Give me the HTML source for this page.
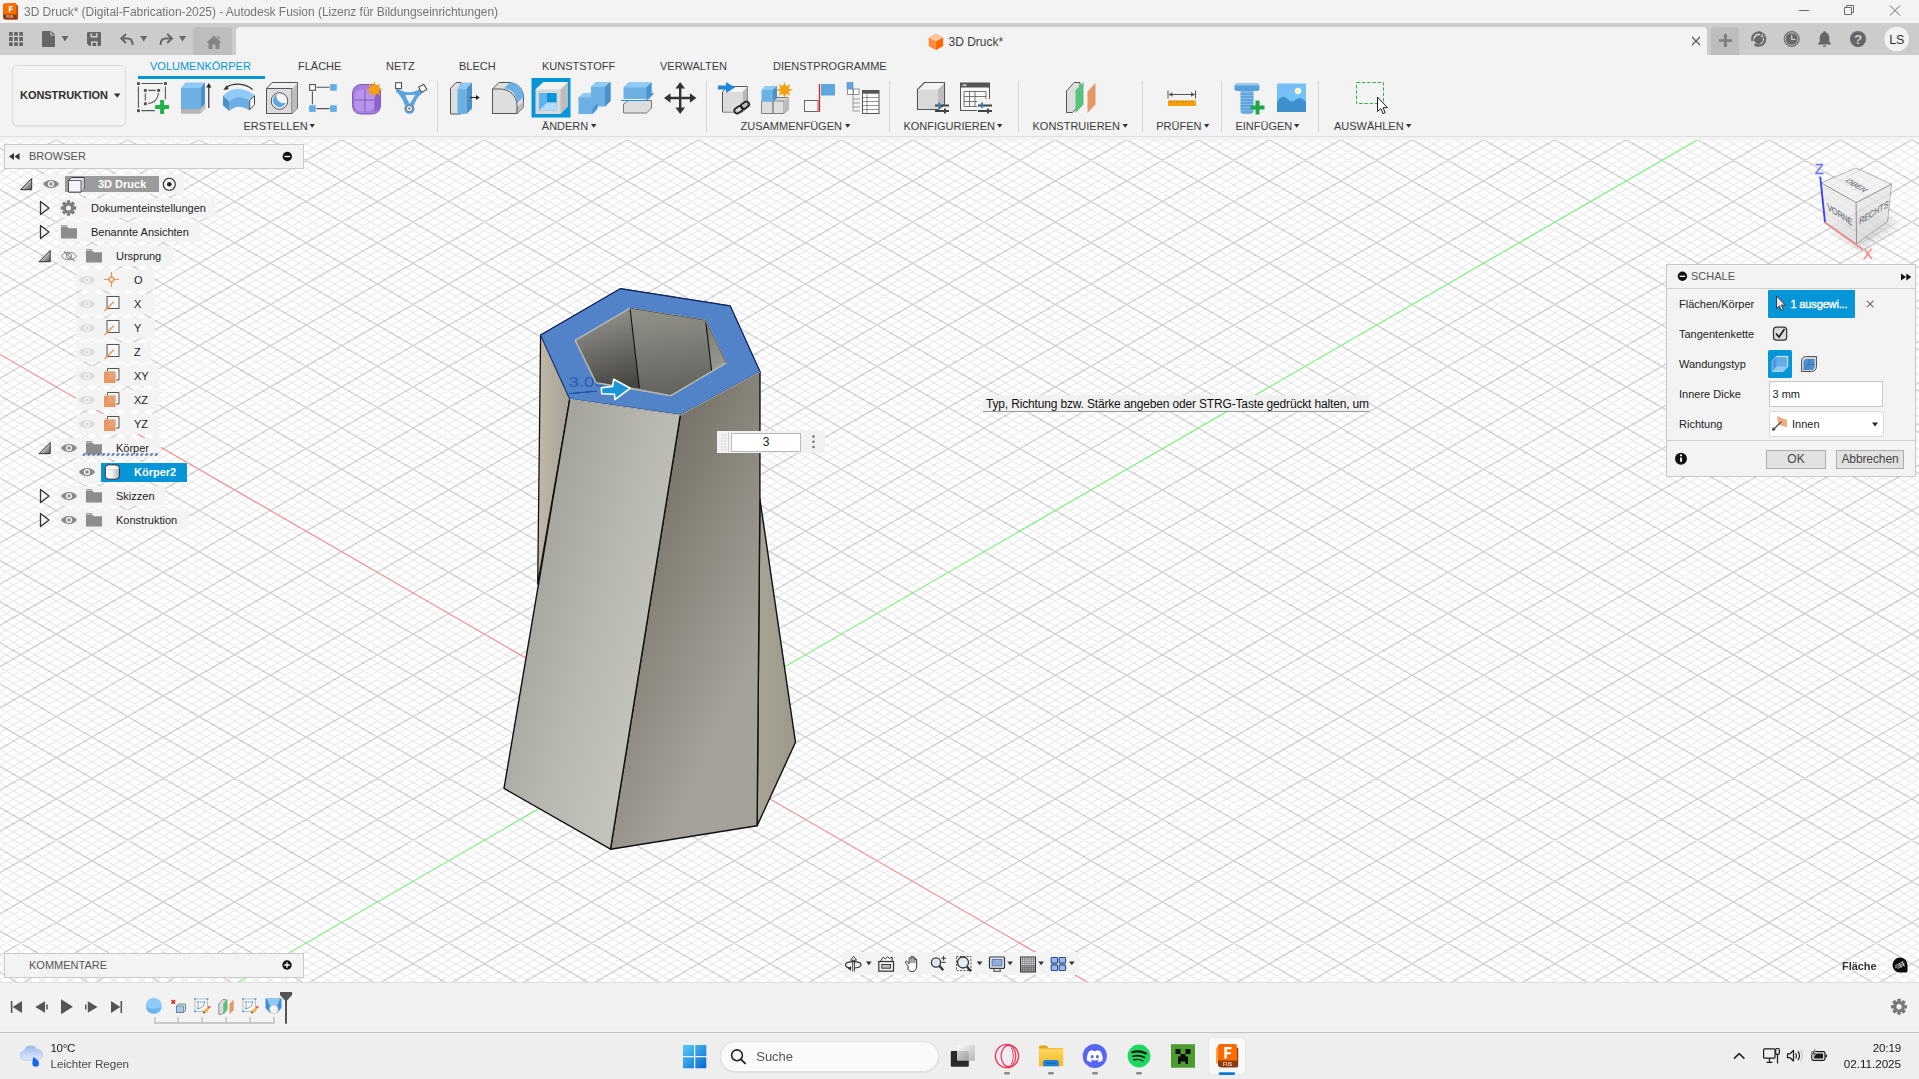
<!DOCTYPE html>
<html lang="de">
<head>
<meta charset="utf-8">
<title>3D Druck* - Autodesk Fusion</title>
<style>
*{box-sizing:border-box;margin:0;padding:0}
html,body{width:1919px;height:1079px;overflow:hidden;background:#f3f3f3}
body{font-family:"Liberation Sans",Arial,sans-serif;font-size:11px;color:#2b2b2b;position:relative}
.abs{position:absolute}
.t{position:absolute;white-space:pre;line-height:1}
svg{position:absolute;overflow:visible}
#titlebar{left:0;top:0;width:1919px;height:23px;background:#f3f3f3}
#tabbar{left:0;top:23px;width:1919px;height:32px;background:#cccccc}
#ribbon{left:0;top:55px;width:1919px;height:85px;background:#f3f3f3}
#canvas{left:0;top:140px;width:1919px;height:842px;background:#fff;overflow:hidden}
#timeline{left:0;top:982px;width:1919px;height:50px;background:#f2f2f2;border-top:1px solid #dedede;border-bottom:1px solid #f6f6f6}
#taskbar{left:0;top:1032px;width:1919px;height:47px;background:#eeeeee;border-top:1px solid #c3c3c3}
.rt{font-size:11px;color:#3c3c3c;top:61px;letter-spacing:0}
.rl{font-size:11px;color:#3c3c3c;top:121px}
.sep{position:absolute;top:81px;width:1px;height:51px;background:#d4d4d4}
.row{position:absolute;height:20px;background:rgba(243,243,243,.93)}
.bt{position:absolute;font-size:11px;color:#222;white-space:pre;line-height:1}
</style>
</head>
<body>
<!-- ===== TITLE BAR ===== -->
<div id="titlebar" class="abs">
<svg width="16" height="17" viewBox="0 0 16 17" style="left:3px;top:3px">
<path d="M1 2.2C1 1.3 1.6.8 2.4.7L11.5 0C12.4 0 13 .5 13 1.4L15 2.6V15.4C15 16.2 14.4 16.8 13.6 16.8H3C2 16.8 1.3 16.3 1.3 15.4Z" fill="#b5410e"/>
<path d="M0 2C0 1 .8.3 1.7.3H11.8C12.8.3 13.5 1 13.5 2V14H0Z" fill="#ff6b00"/>
<path d="M0 11.600H13.500V14.600C13.5 15.4 12.9 16 12 16H1.5C.7 16 0 15.4 0 14.6Z" fill="#8c3a12"/>
<path d="M5.800 2.900H9.900V4.300H7.400V5.700H9.600V7.100H7.400V9.200H5.800Z" fill="#fff"/>
<text x="6.8" y="15.2" font-size="3.4" font-weight="700" fill="#f4c9a6" text-anchor="middle" font-family="Liberation Sans,Arial,sans-serif">FUS</text>
</svg>
<div class="t" style="left:24px;top:6px;font-size:12px;color:#757575;letter-spacing:-.04px;will-change:transform">3D Druck* (Digital-Fabrication-2025) - Autodesk Fusion (Lizenz für Bildungseinrichtungen)</div>
<svg width="120" height="23" viewBox="1790 0 120 23" style="left:1790px;top:0">
<path d="M1799 10.5H1809" stroke="#6a6a6a" stroke-width="1" fill="none"/>
<path d="M1844.5 7.5h7v7h-7zM1846.5 7.5v-2h7v7h-2" stroke="#6a6a6a" stroke-width="1" fill="none" stroke-linejoin="round"/>
<path d="M1890 5.5l10 10M1900 5.5l-10 10" stroke="#6a6a6a" stroke-width="1" fill="none"/>
</svg>

</div>
<!-- ===== TAB BAR ===== -->
<div id="tabbar" class="abs">
<!-- coordinates inside tabbar: y offset 23 -->
<svg width="1919" height="32" viewBox="0 23 1919 32" style="left:0;top:0">
<!-- home tab -->
<path d="M193 55V31a4 4 0 0 1 4-4h31a4 4 0 0 1 4 4V55Z" fill="#bdbdbd"/>
<path d="M214 35.5l7.5 7.2h-2v6.3h-4v-4.500h-3v4.500h-4v-6.300h-2zM217.500 36.500h2v3l-2-2z" fill="#858585"/>
<!-- doc tab -->
<path d="M236 55V31a4 4 0 0 1 4-4H1703a4 4 0 0 1 4 4V55Z" fill="#f3f3f3"/>
<!-- plus btn -->
<path d="M1711 55V31a4 4 0 0 1 4-4h20a4 4 0 0 1 4 4V55Z" fill="#bdbdbd"/>
<path d="M1723.900 34h3.100v13h-3.100zM1719 39.200h13v2.700h-13z" fill="#808080"/>
<!-- app grid -->
<g fill="#666">
<rect x="9" y="32" width="3.8" height="3.8" rx=".5"/><rect x="14.1" y="32" width="3.8" height="3.8" rx=".5"/><rect x="19.2" y="32" width="3.8" height="3.8" rx=".5"/>
<rect x="9" y="37.1" width="3.8" height="3.8" rx=".5"/><rect x="14.1" y="37.1" width="3.8" height="3.8" rx=".5"/><rect x="19.2" y="37.1" width="3.8" height="3.8" rx=".5"/>
<rect x="9" y="42.2" width="3.8" height="3.8" rx=".5"/><rect x="14.1" y="42.2" width="3.8" height="3.8" rx=".5"/><rect x="19.2" y="42.2" width="3.8" height="3.8" rx=".5"/>
<!-- file -->
<path d="M43 31h7.5v4.5H55V46a1 1 0 0 1-1 1H43a1 1 0 0 1-1-1V32a1 1 0 0 1 1-1zM51.5 31l3.5 3.5h-3.5z"/>
<path d="M61.5 36h7l-3.5 5.4z"/>
<!-- save -->
<path d="M88 32h12a1 1 0 0 1 1 1v12a1 1 0 0 1-1 1H89.5L87 43.5V33a1 1 0 0 1 1-1zM90.500 33.300v4.200h7v-4.200h-1.600v2.700h-3.800v-2.700zM91 41.300v4.700h1.500v-3.200h3.500v3.200h1.500v-4.700z" fill-rule="evenodd"/>
<path d="M140.200 36h7l-3.500 5.400z"/>
<path d="M179 36h7l-3.500 5.400z"/>
</g>
<!-- undo / redo -->
<path d="M126 34l-4.800 4.500 4.800 4.500M121.600 38.500h6c3.300 0 5 2.300 5 6.500" stroke="#666" stroke-width="1.900" fill="none" stroke-linejoin="miter"/>
<path d="M167.200 34l4.800 4.500-4.800 4.500M171.600 38.500h-6c-3.300 0-5 2.300-5 6.500" stroke="#666" stroke-width="1.900" fill="none"/>
<!-- doc title -->
<g transform="translate(929,34.100)">
<path d="M7 0L13.900 3.700V11.900L7 15.600L0 11.900V3.700Z" fill="#ff8c3a" stroke="#e8823f" stroke-width=".5"/>
<path d="M7 0L13.900 3.700L7 7.400L0 3.700Z" fill="#ffc89f"/>
<path d="M7 7.400L13.900 3.700V11.900L7 15.600Z" fill="#ff6a00"/>
</g>
<text x="948.500" y="46" font-family="Liberation Sans,Arial,sans-serif" font-size="12" fill="#3c3c3c">3D Druck*</text>
<path d="M1692 37l8 8M1700 37l-8 8" stroke="#555" stroke-width="1.100" fill="none"/>
<!-- right icons -->
<g>
<circle cx="1758.700" cy="39" r="6.600" fill="none" stroke="#666" stroke-width="2.200" stroke-dasharray="37.500 4" transform="rotate(162 1758.700 39)"/>
<rect x="1754.600" y="36" width="7.600" height="7.600" rx="2" fill="#666" transform="rotate(45 1758.400 39.800)"/>
<path d="M1758.700 37.200l3.200-3.200M1760.900 39.300l3.200-3.200" stroke="#666" stroke-width="1.500"/>
<path d="M1761.400 34.900l1.900-1.900M1763.400 36.900l1.900-1.900" stroke="#ccc" stroke-width=".9"/>
<circle cx="1791.700" cy="39" r="7.600" fill="#666" stroke="#666" stroke-width=".8"/>
<circle cx="1791.700" cy="39" r="6.300" fill="none" stroke="#ccc" stroke-width=".9"/>
<path d="M1791.700 34.800v4.600h3.800" stroke="#ccc" stroke-width="1.300" fill="none"/>
<path d="M1824.500 31.200c-.8 0-1.300.5-1.300 1.200-2.300.7-3.500 2.700-3.500 5.300v3.800l-1.700 2.200v.8h13v-.8l-1.700-2.200v-3.800c0-2.600-1.200-4.600-3.500-5.300 0-.7-.5-1.200-1.300-1.200zM1822.800 45.600h3.400c0 .9-.8 1.500-1.700 1.500s-1.700-.6-1.700-1.500z" fill="#666"/>
<circle cx="1858" cy="39" r="8" fill="#666"/>
<text x="1858" y="43.800" font-family="Liberation Sans,Arial,sans-serif" font-size="13.500" font-weight="700" fill="#ccc" text-anchor="middle">?</text>
<circle cx="1896.700" cy="39" r="12.300" fill="#f3f3f3"/>
<text x="1896.700" y="43.600" font-family="Liberation Sans,Arial,sans-serif" font-size="12.500" fill="#333" text-anchor="middle" letter-spacing="-.3">LS</text>
</g>
</svg>

</div>
<!-- ===== RIBBON ===== -->
<div id="ribbon" class="abs">
<!-- ribbon local coords: y offset 55 -->
<div class="abs" style="left:0;top:81px;width:1919px;height:1px;background:#e0e0e0"></div>
<div class="abs" style="left:12px;top:10px;width:114px;height:61px;border:1px solid #dcdcdc;border-radius:5px;background:#f3f3f3;box-shadow:0 1px 1px rgba(0,0,0,.06)"></div>
<div class="t" style="left:20px;top:35px;font-size:11px;font-weight:700;color:#2e2e2e;letter-spacing:-.05px">KONSTRUKTION</div>
<div class="t rt" style="left:150px;top:6px;color:#0696d7;font-size:11px">VOLUMENKÖRPER</div>
<div class="abs" style="left:138px;top:20.500px;width:127px;height:3px;background:#0696d7"></div>
<div class="t rt" style="left:298px;top:6px">FLÄCHE</div>
<div class="t rt" style="left:386px;top:6px">NETZ</div>
<div class="t rt" style="left:459px;top:6px">BLECH</div>
<div class="t rt" style="left:542px;top:6px">KUNSTSTOFF</div>
<div class="t rt" style="left:660px;top:6px">VERWALTEN</div>
<div class="t rt" style="left:773px;top:6px">DIENSTPROGRAMME</div>
<div class="t rl" style="left:243.500px;top:66px">ERSTELLEN</div>
<div class="t rl" style="left:541.800px;top:66px">ÄNDERN</div>
<div class="t rl" style="left:740.500px;top:66px">ZUSAMMENFÜGEN</div>
<div class="t rl" style="left:903.400px;top:66px">KONFIGURIEREN</div>
<div class="t rl" style="left:1032.500px;top:66px">KONSTRUIEREN</div>
<div class="t rl" style="left:1156.200px;top:66px">PRÜFEN</div>
<div class="t rl" style="left:1235.400px;top:66px">EINFÜGEN</div>
<div class="t rl" style="left:1333.900px;top:66px">AUSWÄHLEN</div>
<div class="sep" style="left:437px;top:26px"></div>
<div class="sep" style="left:706px;top:26px"></div>
<div class="sep" style="left:889px;top:26px"></div>
<div class="sep" style="left:1018px;top:26px"></div>
<div class="sep" style="left:1142px;top:26px"></div>
<div class="sep" style="left:1221px;top:26px"></div>
<div class="sep" style="left:1318px;top:26px"></div>
<svg width="1919" height="85" viewBox="0 55 1919 85" style="left:0;top:0">
<g fill="#333">
<path d="M114 93.500h6.400l-3.200 4.200z"/>
<path d="M309.500 124h5.400l-2.700 3.800z"/>
<path d="M591 124h5.400l-2.700 3.800z"/>
<path d="M845 124h5.400l-2.700 3.800z"/>
<path d="M997 124h5.400l-2.700 3.800z"/>
<path d="M1122.500 124h5.400l-2.700 3.800z"/>
<path d="M1204 124h5.400l-2.700 3.800z"/>
<path d="M1294 124h5.400l-2.700 3.800z"/>
<path d="M1406 124h5.400l-2.700 3.800z"/>
</g>
<!-- ===== ERSTELLEN icons ===== -->
<!-- 1 sketch -->
<g>
<path d="M141.500 83.500H162.800M138.400 86.400V107.700M165.400 86.400V99.300M141.500 110.600H154.800" stroke="#555" stroke-width="1.100" fill="none"/>
<g fill="#555"><rect x="137" y="82.100" width="2.900" height="2.900"/><rect x="164" y="82.100" width="2.900" height="2.900"/><rect x="137" y="109.200" width="2.900" height="2.900"/></g>
<path d="M148.200 90.400H155.700M145.300 93.200V100.600" stroke="#555" stroke-width="1.100" fill="none"/>
<g fill="#555"><rect x="143.900" y="89" width="2.900" height="2.900"/><rect x="157.200" y="89" width="2.900" height="2.900"/><rect x="143.900" y="102.300" width="2.900" height="2.900"/></g>
<path d="M158.600 93c-.7 6-4.400 9.700-10.400 10.700" stroke="#555" stroke-width="1.100" fill="none"/>
<path d="M162.100 100.100v13.800M155.100 107h13.900" stroke="#22b14c" stroke-width="4" fill="none"/>
</g>
<!-- 2 extrude -->
<g>
<path d="M181 108.500h19.500l5-4.500v5l-5 4.500H181z" fill="#c4c4c4"/>
<path d="M181 108.500h19.500v5H181z" fill="#b4b4b4"/>
<path d="M181 88h19.500v21H181z" fill="#6db1e4"/>
<path d="M181 88l4.500-5.500H205L200.500 88z" fill="#8fcaf5"/>
<path d="M200.500 88l4.500-5.500v21.500l-4.500 5z" fill="#4a90c9"/>
<path d="M208.800 108v-22" stroke="#222" stroke-width="1.100"/><path d="M206.200 87.500l2.600-4.500 2.600 4.500z" fill="#222"/>
</g>
<!-- 3 revolve -->
<g>
<path d="M223 95.700C228 91 233 89.100 238.500 89.100C244 89.100 250 91.500 254.500 95.300L249.200 100.100C246 98 242.500 97 238.500 97C234.500 97.300 231.500 99 229.200 101.500Z" fill="#8fcafb"/>
<path d="M229.200 101.500C231.500 99 234.500 97.300 238.500 97C242.500 97 246 98 249.200 100.100V110.300C246 108 242.500 106.800 238.500 106.800C234.500 107.200 231.500 108.800 229.200 111Z" fill="#6aafe6"/>
<path d="M223 95.700L229.200 101.500V111L223 105.500Z" fill="#4a90cc"/>
<path d="M249.700 100.300L254.500 95.900V104.600L249.700 109.700Z" fill="#fafafa" stroke="#444" stroke-width="1"/>
<path d="M252.700 89.500C244 82.500 233 82.800 225.500 87.600" stroke="#333" stroke-width="1.100" fill="none"/><path d="M223.300 90l3.500-4.800 1.800 4z" fill="#333"/>
</g>
<!-- 4 hole -->
<g>
<path d="M266.500 88.500l5.500-6h25.500v25.500l-5.500 5.500h-25.500z" fill="#efefef" stroke="#555" stroke-width="1" stroke-linejoin="round"/>
<path d="M266.500 88.500h25.500v25h-25.500z" fill="#dcdcdc" stroke="#555" stroke-width="1"/>
<path d="M292.300 88.800l4.900-5.400v24.300l-4.900 4.900z" fill="#bdbdbd"/>
<circle cx="279.500" cy="101" r="8.300" fill="#f4f4f4" stroke="#555" stroke-width="1"/>
<path d="M273.300 98.300a6.500 6.500 0 1 0 12.400 4.500a7 7 0 0 1-9-8.500a6.500 6.500 0 0 0-3.400 4z" fill="#5ea6de"/>
</g>
<!-- 5 pattern -->
<g>
<path d="M316.500 87.300H329.500M316.500 108.600H329.500M312.400 91.500V104.500" stroke="#555" stroke-width="1.100" fill="none"/>
<rect x="309.600" y="84.500" width="5.800" height="5.800" fill="#fff" stroke="#555" stroke-width="1.100"/>
<rect x="330.100" y="84.100" width="6.700" height="6.600" fill="#62aee6"/>
<rect x="309.100" y="105.300" width="6.700" height="6.600" fill="#62aee6"/>
<rect x="330.100" y="105.300" width="6.700" height="6.600" fill="#62aee6"/>
</g>
<!-- 6 form -->
<g>
<path d="M352.500 95c0-7 3-10.500 10-10.500h9c6 0 9 3 9 9v11c0 6-3 9.500-9.500 9.500h-9c-6.500 0-9.500-3.500-9.500-9.500z" fill="#a77fe0" stroke="#7d55bd" stroke-width="1"/>
<path d="M355 96c0-4 2-6 6-6h8c4 0 5.500 2 5.500 6v9c0 4-2 6-6 6h-7.500c-4 0-6-2-6-6z" fill="#b894ec"/>
<path d="M374.500 93l6-3v18l-6 4z" fill="#8b63cb"/>
<path d="M365 90v21M355 100h19.500" stroke="#7d55bd" stroke-width=".9" fill="none"/>
<path d="M374.500 81.500l1.700 4.300 4.100-2.100-1.700 4.200 4.400 1.600-4.400 1.600 1.700 4.200-4.100-2.100-1.700 4.300-1.700-4.300-4.100 2.100 1.700-4.200-4.400-1.600 4.400-1.600-1.700-4.200 4.100 2.100z" fill="#f5a10e"/>
</g>
<!-- 7 fork -->
<g>
<path d="M397.500 88.200C401.500 91.200 405.500 92.300 410.300 92.300C414.500 92 417.500 90.600 420 88.500L423.800 91.800C419 95.500 416 99 414.300 105H404.500C403.200 99.500 400.500 95.500 395.500 91Z" fill="#5ba3de"/>
<path d="M405.200 95.300L415.200 94.800L409.700 104.300Z" fill="#f3f3f3"/>
<rect x="395.600" y="82.700" width="5.900" height="5.900" fill="#fff" stroke="#555" stroke-width="1.100"/>
<path d="M418.600 87.200L423.700 84.200L426.800 89.400L421.700 92.500Z" fill="#fff" stroke="#555" stroke-width="1.100"/>
<circle cx="409.400" cy="108.600" r="5.200" fill="#5ba3de"/><circle cx="409.400" cy="108.600" r="3.200" fill="#f1f1f1" stroke="#666" stroke-width=".9"/><path d="M407.900 108.600h3M409.400 107.100v3" stroke="#666" stroke-width=".7"/>
</g>
<!-- ===== ÄNDERN icons ===== -->
<!-- press pull -->
<g>
<path d="M450.500 88.500l5.500-6h5v31.500h-10.500z" fill="#dedede" stroke="#555" stroke-width="1" stroke-linejoin="round"/>
<path d="M457.500 88.500h9v25.500h-9z" fill="#6db1e4"/>
<path d="M457.500 88.500l5-6h9.500l-5.500 6z" fill="#8fcaf5"/>
<path d="M466.500 88.500l5.500-6v26l-5.500 5.500z" fill="#4a90c9"/>
<path d="M470 97.500h7" stroke="#222" stroke-width="1.100"/><path d="M476 95l3.800 2.500-3.800 2.500z" fill="#222"/>
</g>
<!-- fillet -->
<g>
<path d="M492.500 113.500v-24.500l6.500-6.500h9c9 0 15.500 6 15.500 15v10l-6.500 6z" fill="#dedede" stroke="#555" stroke-width="1" stroke-linejoin="round"/>
<path d="M517 107.500l6.500-6v6l-6.500 6z" fill="#bcbcbc"/>
<path d="M492.500 89h7c10 0 17.500 6.500 17.500 16.500v8h-24.500z" fill="#dedede" stroke="#555" stroke-width="1"/>
<path d="M504 88.500l6-6c8 .5 13.500 6 13.500 14.500l-6.500 6c0-8-4.500-14-13-14.500z" fill="#6db1e4"/>
</g>
<!-- shell selected -->
<g>
<rect x="531.500" y="78" width="39" height="39.500" fill="#0696d7"/>
<path d="M535.500 89.500l8-7.500h24.500v24l-7.500 8h-25z" fill="#d9d9d9"/>
<path d="M535.500 89.500l8-7.500h24.500l-7.500 7.500z" fill="#f2f2f2"/>
<path d="M560.500 89.500l7.500-7.500v24l-7.500 8z" fill="#bdbdbd"/>
<rect x="539" y="93" width="17.500" height="17.500" fill="#5fb2ec"/>
<path d="M547 93h9.500v9.500h-9.500z" fill="#0696d7"/>
<path d="M539 110.500l8-8h9.500v8z" fill="#b3dcfa"/>
</g>
<!-- combine -->
<g>
<path d="M578.500 97.500l5-4.500h7.500v-6l5-5h14.500v19l-5.500 5.500h-7.500v2l-5 5.500h-14z" fill="#6db1e4"/>
<path d="M590.500 87l5.500-5h14.500l-5.500 5zM578.500 97.500l5-4.500h7.500v4.500z" fill="#8fcaf5"/>
<path d="M605 87l5.500-5v19l-5.500 5.500zM592.500 108.500l5-5v5l-5 5.500z" fill="#4a90c9"/>
</g>
<!-- split -->
<g>
<path d="M623.500 104l5-3.500h23v7.500l-5 5h-23z" fill="#dedede" stroke="#777" stroke-width="1" stroke-linejoin="round"/>
<path d="M623.500 87.500l5-5h23v12l-5 4.500h-23z" fill="#6db1e4"/>
<path d="M623.500 87.500l5-5h23l-5 5z" fill="#8fcaf5"/>
<path d="M646.500 87.500l5-5v12l-5 4.500z" fill="#4a90c9"/>
<path d="M621 100.500h25.500l7-7.500" stroke="#2e8ad6" stroke-width="1.200" fill="none"/>
</g>
<!-- move -->
<g fill="#333">
<path d="M679 86h2.400v24h-2.400zM668 96.800h24v2.400h-24z"/>
<path d="M680.200 82l4.800 6.500h-9.600zM680.200 114l4.800-6.500h-9.600zM664 98l6.500-4.800v9.600zM696.400 98l-6.500-4.800v9.600z"/>
</g>
<!-- ===== ZUSAMMENFÜGEN ===== -->
<!-- new component -->
<g>
<path d="M722.500 92l5-5.500h20v20.500l-5 5h-20z" fill="#f6f6f6" stroke="#555" stroke-width="1" stroke-linejoin="round"/>
<path d="M742.500 92l5-5.500v20.500l-5 5z" fill="#b8b8b8"/>
<path d="M723 92h19.500v19.500h-19.500z" fill="#dcdcdc"/>
<path d="M718 85.500h8v-3.500l9 5.500-9 5.500v-3.500h-8z" fill="#1e88e0"/>
<g fill="none" stroke="#222" stroke-width="1.700"><rect x="734" y="107" width="9" height="5.500" rx="2.750" transform="rotate(-35 738.500 109.750)"/><rect x="740.500" y="102.500" width="9" height="5.500" rx="2.750" transform="rotate(-35 745 105.250)"/></g>
</g>
<!-- new body cubes -->
<g>
<path d="M761.500 101l4-3.500h22.500v12l-4 4h-22.500z" fill="#d6d6d6" stroke="#777" stroke-width="1" stroke-linejoin="round"/>
<path d="M761.500 101h11.500v12.500h-11.500zM773 101h11v12.500h-11z" fill="#dedede" stroke="#777" stroke-width=".8"/>
<path d="M784 101l4-3.500v12l-4 4z" fill="#bdbdbd"/>
<path d="M761.500 90l4-4h11.500v12l-4 3.500h-11.500z" fill="#6db1e4"/>
<path d="M761.500 90l4-4h11.500l-4 4z" fill="#8fcaf5"/><path d="M773 90l4-4v12l-4 3.500z" fill="#4a90c9"/>
<path d="M784.500 82l1.700 4.300 4.100-2.100-1.700 4.200 4.400 1.600-4.400 1.600 1.700 4.200-4.100-2.100-1.700 4.300-1.700-4.300-4.100 2.100 1.700-4.200-4.400-1.600 4.400-1.600-1.700-4.200 4.100 2.100z" fill="#f5a10e"/>
</g>
<!-- joint -->
<g>
<rect x="804.500" y="100.500" width="13.500" height="11" fill="#f6f6f6" stroke="#666" stroke-width="1"/>
<path d="M819.500 84v28" stroke="#d22" stroke-width="1.300"/>
<rect x="821" y="84" width="14" height="11.500" fill="#5ea6de"/>
</g>
<!-- table / joint origin -->
<g>
<rect x="847" y="82.500" width="6" height="6" fill="#5ea6de" stroke="#4a90c9" stroke-width=".6"/>
<rect x="847.500" y="89" width="5.500" height="5.500" fill="#fff" stroke="#777" stroke-width=".8"/><rect x="853.500" y="89" width="5.500" height="5.500" fill="#fff" stroke="#777" stroke-width=".8"/>
<path d="M853 95v16M853 99h7M853 103h7M853 107h7M853 111h7" stroke="#999" stroke-width="1" fill="none"/>
<rect x="862.500" y="90.500" width="16.500" height="23" fill="#fff" stroke="#555" stroke-width="1"/>
<rect x="862.500" y="90.500" width="16.500" height="3.200" fill="#555"/>
<path d="M862.500 97.500h16.500M862.500 101.500h16.500M862.500 105.500h16.500M862.500 109.500h16.500M867 93.500v20" stroke="#777" stroke-width=".8" fill="none"/>
</g>
<!-- ===== KONFIGURIEREN ===== -->
<g>
<path d="M917.500 89.500l7-7h20v21.500l-6 5.500h-21z" fill="#f4f4f4" stroke="#555" stroke-width="1.100" stroke-linejoin="round"/>
<path d="M918 89.500h20v19.500h-20z" fill="#d9d9d9"/>
<path d="M938 89.500l6-6v19.500l-6 6z" fill="#bdbdbd"/>
<path d="M935 105.500h14M935 111h14" stroke="#444" stroke-width="1.800"/><path d="M939 102.500v5.500" stroke="#1e88e0" stroke-width="2"/><path d="M945 108.500v5" stroke="#444" stroke-width="2"/>
</g>
<g>
<rect x="960.500" y="83" width="29" height="27.500" fill="#f8f8f8" stroke="#555" stroke-width="1"/>
<rect x="960.500" y="83" width="29" height="4.500" fill="#555"/><rect x="962.500" y="84.500" width="4" height="1.300" fill="#eee"/>
<path d="M964 91.500h22v15h-22zM964 96.500h22M964 101.500h22M969.500 91.500v15M975 91.500v15" stroke="#666" stroke-width=".9" fill="none"/>
<rect x="977" y="99" width="16" height="15" fill="#f3f3f3"/>
<path d="M978 105.500h14M978 111h14" stroke="#444" stroke-width="1.800"/><path d="M982 102.500v5.500" stroke="#1e88e0" stroke-width="2"/><path d="M988 108.500v5" stroke="#444" stroke-width="2"/>
</g>
<!-- ===== KONSTRUIEREN ===== -->
<g>
<path d="M1066.500 91l7.500-8.500h6v22l-7.500 8h-6z" fill="#dedede" stroke="#555" stroke-width="1" stroke-linejoin="round"/>
<path d="M1075.500 90.500l8-8.500v22.500l-8 8.500z" fill="#56c27a"/>
<path d="M1087.500 91.500l8-8.500v21.500l-8 8.500z" fill="#e59864"/>
</g>
<!-- ===== PRÜFEN ===== -->
<g>
<path d="M1168 90.500v8M1195.500 90.500v8M1169 94.500h26" stroke="#555" stroke-width="1" fill="none"/>
<path d="M1168.500 94.500l4-2.200v4.400zM1195 94.500l-4-2.200v4.400z" fill="#555"/>
<rect x="1168" y="100.500" width="28" height="5.500" fill="#f5a10e"/>
<path d="M1171 100.500v2.500M1174 100.500v2M1177 100.500v2.500M1180 100.500v2M1183 100.500v2.500M1186 100.500v2M1189 100.500v2.500M1192 100.500v2" stroke="#a86a00" stroke-width=".8"/>
</g>
<!-- ===== EINFÜGEN ===== -->
<g>
<path d="M1236 83.500h22l1.500 2v4l-1.500 1.500h-22l-1.500-1.500v-4z" fill="#5a9fd6"/>
<path d="M1236 83.500h22l1.500 2h-25z" fill="#8fcaf5"/>
<path d="M1240.500 91h13v21l-2 2h-9l-2-2z" fill="#7db9ea"/>
<path d="M1240.500 94h13M1240.500 97h13M1240.500 100h13M1240.500 103h13M1240.500 106h13M1240.500 109h13M1241 112h12" stroke="#4a90c9" stroke-width="1"/>
<path d="M1257.500 100.500v14M1250.500 107.500h14" stroke="#22a548" stroke-width="4" fill="none"/>
</g>
<g>
<rect x="1277" y="83.500" width="29" height="28.500" fill="#74c0f7"/>
<path d="M1277 102c4-6 7-7 11-2.500c2 2 4 3 7 1c3-3 6-4 11 1.500v10h-29z" fill="#3d8fce"/>
<circle cx="1298" cy="91" r="3.200" fill="#fff6c2"/>
</g>
<!-- ===== AUSWÄHLEN ===== -->
<g>
<rect x="1356.500" y="82.500" width="27" height="21" fill="none" stroke="#2bb24c" stroke-width="1" stroke-dasharray="3.500 1.800"/>
<path d="M1377.500 97v14.500l3.300-3 2.200 5.200 2.200-1-2.200-5h4.500z" fill="#fff" stroke="#222" stroke-width="1" stroke-linejoin="round"/>
</g>

</svg>

</div>
<!-- ===== CANVAS ===== -->
<div id="canvas" class="abs">
<svg width="1919" height="842" viewBox="0 140 1919 842" style="left:0;top:0">
<path d="M0 980.6L1919 2088.6M0 964.1L1919 2072.1M0 955.9L1919 2063.8M0 947.7L1919 2055.6M0 939.4L1919 2047.4M0 922.9L1919 2030.9M0 914.7L1919 2022.6M0 906.5L1919 2014.4M0 898.2L1919 2006.2M0 881.7L1919 1989.7M0 873.5L1919 1981.4M0 865.3L1919 1973.2M0 857.0L1919 1965.0M0 840.5L1919 1948.5M0 832.3L1919 1940.2M0 824.1L1919 1932.0M0 815.8L1919 1923.8M0 799.3L1919 1907.3M0 791.1L1919 1899.0M0 782.9L1919 1890.8M0 774.6L1919 1882.6M0 758.1L1919 1866.1M0 749.9L1919 1857.8M0 741.7L1919 1849.6M0 733.4L1919 1841.4M0 716.9L1919 1824.9M0 708.7L1919 1816.6M0 700.5L1919 1808.4M0 692.2L1919 1800.2M0 675.7L1919 1783.7M0 667.5L1919 1775.4M0 659.3L1919 1767.2M0 651.0L1919 1759.0M0 634.5L1919 1742.5M0 626.3L1919 1734.2M0 618.1L1919 1726.0M0 609.8L1919 1717.8M0 593.3L1919 1701.3M0 585.1L1919 1693.0M0 576.9L1919 1684.8M0 568.6L1919 1676.6M0 552.1L1919 1660.1M0 543.9L1919 1651.8M0 535.7L1919 1643.6M0 527.4L1919 1635.4M0 510.9L1919 1618.9M0 502.7L1919 1610.6M0 494.5L1919 1602.4M0 486.2L1919 1594.2M0 469.7L1919 1577.7M0 461.5L1919 1569.4M0 453.3L1919 1561.2M0 445.0L1919 1553.0M0 428.5L1919 1536.5M0 420.3L1919 1528.2M0 412.1L1919 1520.0M0 403.8L1919 1511.8M0 387.3L1919 1495.3M0 379.1L1919 1487.0M0 370.9L1919 1478.8M0 362.6L1919 1470.6M0 346.1L1919 1454.1M0 337.9L1919 1445.8M0 329.7L1919 1437.6M0 321.4L1919 1429.4M0 304.9L1919 1412.9M0 296.7L1919 1404.6M0 288.5L1919 1396.4M0 280.2L1919 1388.2M0 263.7L1919 1371.7M0 255.5L1919 1363.4M0 247.3L1919 1355.2M0 239.0L1919 1347.0M0 222.5L1919 1330.5M0 214.3L1919 1322.2M0 206.1L1919 1314.0M0 197.8L1919 1305.8M0 181.3L1919 1289.3M0 173.1L1919 1281.0M0 164.9L1919 1272.8M0 156.6L1919 1264.6M0 140.1L1919 1248.1M0 131.9L1919 1239.8M0 123.7L1919 1231.6M0 115.4L1919 1223.4M0 98.9L1919 1206.9M0 90.7L1919 1198.6M0 82.5L1919 1190.4M0 74.2L1919 1182.2M0 57.7L1919 1165.7M0 49.5L1919 1157.4M0 41.3L1919 1149.2M0 33.0L1919 1141.0M0 16.5L1919 1124.5M0 8.3L1919 1116.2M0 0.1L1919 1108.0M0 -8.2L1919 1099.8M0 -24.7L1919 1083.3M0 -32.9L1919 1075.0M0 -41.1L1919 1066.8M0 -49.4L1919 1058.6M0 -65.9L1919 1042.1M0 -74.1L1919 1033.8M0 -82.3L1919 1025.6M0 -90.6L1919 1017.4M0 -107.1L1919 1000.9M0 -115.3L1919 992.6M0 -123.5L1919 984.4M0 -131.8L1919 976.2M0 -148.3L1919 959.7M0 -156.5L1919 951.4M0 -164.7L1919 943.2M0 -173.0L1919 935.0M0 -189.5L1919 918.5M0 -197.7L1919 910.2M0 -205.9L1919 902.0M0 -214.2L1919 893.8M0 -230.7L1919 877.3M0 -238.9L1919 869.0M0 -247.1L1919 860.8M0 -255.4L1919 852.6M0 -271.9L1919 836.1M0 -280.1L1919 827.8M0 -288.3L1919 819.6M0 -296.6L1919 811.4M0 -313.1L1919 794.9M0 -321.3L1919 786.6M0 -329.5L1919 778.4M0 -337.8L1919 770.2M0 -354.3L1919 753.7M0 -362.5L1919 745.4M0 -370.7L1919 737.2M0 -379.0L1919 729.0M0 -395.5L1919 712.5M0 -403.7L1919 704.2M0 -411.9L1919 696.0M0 -420.2L1919 687.8M0 -436.7L1919 671.3M0 -444.9L1919 663.0M0 -453.1L1919 654.8M0 -461.4L1919 646.6M0 -477.9L1919 630.1M0 -486.1L1919 621.8M0 -494.3L1919 613.6M0 -502.6L1919 605.4M0 -519.1L1919 588.9M0 -527.3L1919 580.6M0 -535.5L1919 572.4M0 -543.8L1919 564.2M0 -560.3L1919 547.7M0 -568.5L1919 539.4M0 -576.7L1919 531.2M0 -585.0L1919 523.0M0 -601.5L1919 506.5M0 -609.7L1919 498.2M0 -617.9L1919 490.0M0 -626.2L1919 481.8M0 -642.7L1919 465.3M0 -650.9L1919 457.0M0 -659.1L1919 448.8M0 -667.4L1919 440.6M0 -683.9L1919 424.1M0 -692.1L1919 415.8M0 -700.3L1919 407.6M0 -708.6L1919 399.4M0 -725.1L1919 382.9M0 -733.3L1919 374.6M0 -741.5L1919 366.4M0 -749.8L1919 358.2M0 -766.3L1919 341.7M0 -774.5L1919 333.4M0 -782.7L1919 325.2M0 -791.0L1919 317.0M0 -807.5L1919 300.5M0 -815.7L1919 292.2M0 -823.9L1919 284.0M0 -832.2L1919 275.8M0 -848.7L1919 259.3M0 -856.9L1919 251.0M0 -865.1L1919 242.8M0 -873.4L1919 234.6M0 -889.9L1919 218.1M0 -898.1L1919 209.8M0 -906.3L1919 201.6M0 -914.6L1919 193.4M0 -931.1L1919 176.9M0 -939.3L1919 168.6M0 -947.5L1919 160.4M0 -955.8L1919 152.2M0 139.3L1919 -968.7M0 147.5L1919 -960.4M0 155.7L1919 -952.2M0 164.0L1919 -944.0M0 180.5L1919 -927.5M0 188.7L1919 -919.2M0 196.9L1919 -911.0M0 205.2L1919 -902.8M0 221.7L1919 -886.3M0 229.9L1919 -878.0M0 238.1L1919 -869.8M0 246.4L1919 -861.6M0 262.9L1919 -845.1M0 271.1L1919 -836.8M0 279.3L1919 -828.6M0 287.6L1919 -820.4M0 304.1L1919 -803.9M0 312.3L1919 -795.6M0 320.5L1919 -787.4M0 328.8L1919 -779.2M0 345.3L1919 -762.7M0 353.5L1919 -754.4M0 361.7L1919 -746.2M0 370.0L1919 -738.0M0 386.5L1919 -721.5M0 394.7L1919 -713.2M0 402.9L1919 -705.0M0 411.2L1919 -696.8M0 427.7L1919 -680.3M0 435.9L1919 -672.0M0 444.1L1919 -663.8M0 452.4L1919 -655.6M0 468.9L1919 -639.1M0 477.1L1919 -630.8M0 485.3L1919 -622.6M0 493.6L1919 -614.4M0 510.1L1919 -597.9M0 518.3L1919 -589.6M0 526.5L1919 -581.4M0 534.8L1919 -573.2M0 551.3L1919 -556.7M0 559.5L1919 -548.4M0 567.7L1919 -540.2M0 576.0L1919 -532.0M0 592.5L1919 -515.5M0 600.7L1919 -507.2M0 608.9L1919 -499.0M0 617.2L1919 -490.8M0 633.7L1919 -474.3M0 641.9L1919 -466.0M0 650.1L1919 -457.8M0 658.4L1919 -449.6M0 674.9L1919 -433.1M0 683.1L1919 -424.8M0 691.3L1919 -416.6M0 699.6L1919 -408.4M0 716.1L1919 -391.9M0 724.3L1919 -383.6M0 732.5L1919 -375.4M0 740.8L1919 -367.2M0 757.3L1919 -350.7M0 765.5L1919 -342.4M0 773.7L1919 -334.2M0 782.0L1919 -326.0M0 798.5L1919 -309.5M0 806.7L1919 -301.2M0 814.9L1919 -293.0M0 823.2L1919 -284.8M0 839.7L1919 -268.3M0 847.9L1919 -260.0M0 856.1L1919 -251.8M0 864.4L1919 -243.6M0 880.9L1919 -227.1M0 889.1L1919 -218.8M0 897.3L1919 -210.6M0 905.6L1919 -202.4M0 922.1L1919 -185.9M0 930.3L1919 -177.6M0 938.5L1919 -169.4M0 946.8L1919 -161.2M0 963.3L1919 -144.7M0 971.5L1919 -136.4M0 979.7L1919 -128.2M0 988.0L1919 -120.0M0 1004.5L1919 -103.5M0 1012.7L1919 -95.2M0 1020.9L1919 -87.0M0 1029.2L1919 -78.8M0 1045.7L1919 -62.3M0 1053.9L1919 -54.0M0 1062.1L1919 -45.8M0 1070.4L1919 -37.6M0 1086.9L1919 -21.1M0 1095.1L1919 -12.8M0 1103.3L1919 -4.6M0 1111.6L1919 3.6M0 1128.1L1919 20.1M0 1136.3L1919 28.4M0 1144.5L1919 36.6M0 1152.8L1919 44.8M0 1169.3L1919 61.3M0 1177.5L1919 69.6M0 1185.7L1919 77.8M0 1194.0L1919 86.0M0 1210.5L1919 102.5M0 1218.7L1919 110.8M0 1226.9L1919 119.0M0 1235.2L1919 127.2M0 1251.7L1919 143.7M0 1259.9L1919 152.0M0 1268.1L1919 160.2M0 1276.4L1919 168.4M0 1292.9L1919 184.9M0 1301.1L1919 193.2M0 1309.3L1919 201.4M0 1317.6L1919 209.6M0 1334.1L1919 226.1M0 1342.3L1919 234.4M0 1350.5L1919 242.6M0 1358.8L1919 250.8M0 1375.3L1919 267.3M0 1383.5L1919 275.6M0 1391.7L1919 283.8M0 1400.0L1919 292.0M0 1416.5L1919 308.5M0 1424.7L1919 316.8M0 1432.9L1919 325.0M0 1441.2L1919 333.2M0 1457.7L1919 349.7M0 1465.9L1919 358.0M0 1474.1L1919 366.2M0 1482.4L1919 374.4M0 1498.9L1919 390.9M0 1507.1L1919 399.2M0 1515.3L1919 407.4M0 1523.6L1919 415.6M0 1540.1L1919 432.1M0 1548.3L1919 440.4M0 1556.5L1919 448.6M0 1564.8L1919 456.8M0 1581.3L1919 473.3M0 1589.5L1919 481.6M0 1597.7L1919 489.8M0 1606.0L1919 498.0M0 1622.5L1919 514.5M0 1630.7L1919 522.8M0 1638.9L1919 531.0M0 1647.2L1919 539.2M0 1663.7L1919 555.7M0 1671.9L1919 564.0M0 1680.1L1919 572.2M0 1688.4L1919 580.4M0 1704.9L1919 596.9M0 1713.1L1919 605.2M0 1721.3L1919 613.4M0 1729.6L1919 621.6M0 1746.1L1919 638.1M0 1754.3L1919 646.4M0 1762.5L1919 654.6M0 1770.8L1919 662.8M0 1787.3L1919 679.3M0 1795.5L1919 687.6M0 1803.7L1919 695.8M0 1812.0L1919 704.0M0 1828.5L1919 720.5M0 1836.7L1919 728.8M0 1844.9L1919 737.0M0 1853.2L1919 745.2M0 1869.7L1919 761.7M0 1877.9L1919 770.0M0 1886.1L1919 778.2M0 1894.4L1919 786.4M0 1910.9L1919 802.9M0 1919.1L1919 811.2M0 1927.3L1919 819.4M0 1935.6L1919 827.6M0 1952.1L1919 844.1M0 1960.3L1919 852.4M0 1968.5L1919 860.6M0 1976.8L1919 868.8M0 1993.3L1919 885.3M0 2001.5L1919 893.6M0 2009.7L1919 901.8M0 2018.0L1919 910.0M0 2034.5L1919 926.5M0 2042.7L1919 934.8M0 2050.9L1919 943.0M0 2059.2L1919 951.2M0 2075.7L1919 967.7M0 2083.9L1919 976.0" stroke="#000" stroke-opacity=".088" stroke-width="1.15" fill="none"/>
<path d="M0 972.4L1919 2080.3M0 931.2L1919 2039.1M0 890.0L1919 1997.9M0 848.8L1919 1956.7M0 807.6L1919 1915.5M0 766.4L1919 1874.3M0 725.2L1919 1833.1M0 684.0L1919 1791.9M0 642.8L1919 1750.7M0 601.6L1919 1709.5M0 560.4L1919 1668.3M0 519.2L1919 1627.1M0 478.0L1919 1585.9M0 436.8L1919 1544.7M0 395.6L1919 1503.5M0 313.2L1919 1421.1M0 272.0L1919 1379.9M0 230.8L1919 1338.7M0 189.6L1919 1297.5M0 148.4L1919 1256.3M0 107.2L1919 1215.1M0 66.0L1919 1173.9M0 24.8L1919 1132.7M0 -16.4L1919 1091.5M0 -57.6L1919 1050.3M0 -98.8L1919 1009.1M0 -140.0L1919 967.9M0 -181.2L1919 926.7M0 -222.4L1919 885.5M0 -263.6L1919 844.3M0 -304.8L1919 803.1M0 -346.0L1919 761.9M0 -387.2L1919 720.7M0 -428.4L1919 679.5M0 -469.6L1919 638.3M0 -510.8L1919 597.1M0 -552.0L1919 555.9M0 -593.2L1919 514.7M0 -634.4L1919 473.5M0 -675.6L1919 432.3M0 -716.8L1919 391.1M0 -758.0L1919 349.9M0 -799.2L1919 308.7M0 -840.4L1919 267.5M0 -881.6L1919 226.3M0 -922.8L1919 185.1M0 -964.0L1919 143.9M0 172.2L1919 -935.7M0 213.4L1919 -894.5M0 254.6L1919 -853.3M0 295.8L1919 -812.1M0 337.0L1919 -770.9M0 378.2L1919 -729.7M0 419.4L1919 -688.5M0 460.6L1919 -647.3M0 501.8L1919 -606.1M0 543.0L1919 -564.9M0 584.2L1919 -523.7M0 625.4L1919 -482.5M0 666.6L1919 -441.3M0 707.8L1919 -400.1M0 749.0L1919 -358.9M0 790.2L1919 -317.7M0 831.4L1919 -276.5M0 872.6L1919 -235.3M0 913.8L1919 -194.1M0 955.0L1919 -152.9M0 996.2L1919 -111.7M0 1037.4L1919 -70.5M0 1078.6L1919 -29.3M0 1161.0L1919 53.1M0 1202.2L1919 94.3M0 1243.4L1919 135.5M0 1284.6L1919 176.7M0 1325.8L1919 217.9M0 1367.0L1919 259.1M0 1408.2L1919 300.3M0 1449.4L1919 341.5M0 1490.6L1919 382.7M0 1531.8L1919 423.9M0 1573.0L1919 465.1M0 1614.2L1919 506.3M0 1655.4L1919 547.5M0 1696.6L1919 588.7M0 1737.8L1919 629.9M0 1779.0L1919 671.1M0 1820.2L1919 712.3M0 1861.4L1919 753.5M0 1902.6L1919 794.7M0 1943.8L1919 835.9M0 1985.0L1919 877.1M0 2026.2L1919 918.3M0 2067.4L1919 959.5" stroke="#000" stroke-opacity=".175" stroke-width="1.35" fill="none"/>
<path d="M0 354.4L1919 1462.3" stroke="#f58c8c" stroke-width="1.2" fill="none"/>
<path d="M0 1119.8L1919 11.9" stroke="#7cf07c" stroke-width="1.2" fill="none"/>

<defs>
<linearGradient id="gL" gradientUnits="userSpaceOnUse" x1="520" y1="600" x2="660" y2="640"><stop offset="0" stop-color="#a5a59d"/><stop offset=".55" stop-color="#b8b8b0"/><stop offset="1" stop-color="#c3c3bb"/></linearGradient>
<linearGradient id="gM" gradientUnits="userSpaceOnUse" x1="600" y1="400" x2="827" y2="506"><stop offset="0" stop-color="#625e53"/><stop offset=".5" stop-color="#848075"/><stop offset="1" stop-color="#a5a29b"/></linearGradient>
<linearGradient id="gS" gradientUnits="userSpaceOnUse" x1="538" y1="0" x2="565" y2="0"><stop offset="0" stop-color="#c2b9a8"/><stop offset="1" stop-color="#a9a599"/></linearGradient>
<linearGradient id="gR" gradientUnits="userSpaceOnUse" x1="757" y1="0" x2="795" y2="0"><stop offset="0" stop-color="#a9a595"/><stop offset="1" stop-color="#9b978b"/></linearGradient>
<linearGradient id="gI1" gradientUnits="userSpaceOnUse" x1="600" y1="320" x2="620" y2="390"><stop offset="0" stop-color="#8c8a83"/><stop offset="1" stop-color="#454340"/></linearGradient>
<linearGradient id="gI2" gradientUnits="userSpaceOnUse" x1="670" y1="312" x2="680" y2="395"><stop offset="0" stop-color="#8f8f88"/><stop offset="1" stop-color="#62625d"/></linearGradient>
<linearGradient id="gI3" gradientUnits="userSpaceOnUse" x1="706" y1="330" x2="724" y2="365"><stop offset="0" stop-color="#7d7d77"/><stop offset="1" stop-color="#9a9a93"/></linearGradient>
</defs>
<g stroke-linejoin="round">
<!-- left sliver -->
<path d="M540.6 334.9L569.8 398.9L537.7 584Z" fill="url(#gS)" stroke="#111" stroke-width="1.3"/>
<!-- right sliver -->
<path d="M759.9 499L795.5 742.3L757.1 825.7Z" fill="url(#gR)" stroke="#111" stroke-width="1.4"/>
<!-- middle face -->
<path d="M680.4 414.6L760 371.6L759.9 499L757.1 825.7L610.5 849.2Z" fill="url(#gM)" stroke="#111" stroke-width="1.4"/>
<!-- left main face -->
<path d="M569.8 398.9L680.4 414.6L610.5 849.2L504 788.4Z" fill="url(#gL)" stroke="#111" stroke-width="1.4"/>
<!-- top ring (selected, blue) -->
<path d="M620.5 288.6L730.3 305.9L760 371.6L680.4 414.6L569.8 398.9L540.6 334.9Z" fill="#5283c9" stroke="#1d3f86" stroke-width="1"/>
<path d="M540.6 334.9L620.5 288.6L730.3 305.9L760 371.6" fill="none" stroke="#14265c" stroke-width="1.1"/>
<!-- light inner rim on ring outer edges -->
<path d="M569.8 398.9L680.4 414.6L760 371.6" fill="none" stroke="#b9b9b2" stroke-width="1" transform="translate(0,.4)"/>
<!-- dimension 3.00 -->
<text transform="translate(568.4,386.9) scale(1.3,1)" font-family="Liberation Sans, Arial, sans-serif" font-size="14.300" fill="#2a5cae">3.00</text>
<path d="M568.7 393.6L596.6 391.2" stroke="#1f4f9e" stroke-width="1" fill="none"/>
<path d="M573 393.2l6-1.6 0.3 2.2z M592 391.6l-6-0.6 0.3 2.2z" fill="#1f4f9e"/>
<!-- cavity -->
<path d="M630 308.3L705.6 320.4L726.1 363L670.9 395.6L596.1 382.7L575.3 340.4Z" fill="#77776f" stroke="#b5b5ad" stroke-width="1.2"/>
<path d="M630 308.3L639.4 388.2L596.1 382.7L575.3 340.4Z" fill="url(#gI1)"/>
<path d="M630 308.3L705.6 320.4L711.6 370.8L670.9 395.6L639.4 388.2Z" fill="url(#gI2)"/>
<path d="M705.6 320.4L726.1 363L711.6 370.8Z" fill="url(#gI3)"/>
<path d="M630 308.3L639.4 388.2M705.6 320.4L711.6 370.8" stroke="#111" stroke-width="1.1" fill="none"/>
<path d="M630 308.3L705.6 320.4L726.1 363L670.9 395.6L596.1 382.7L575.3 340.4Z" fill="none" stroke="#b8b8b0" stroke-width="1.3"/>
<path d="M630 308.3L705.6 320.4L726.1 363" fill="none" stroke="#3a3a38" stroke-width=".8"/>
</g>
<!-- blue manip arrow -->
<path d="M601.3 387.7L612.6 386.4L613.7 379.2L630.3 388.2L614.9 399.6L614.5 394.2L601.7 393.8Z" fill="#1b97d8" stroke="#fff" stroke-width="1.6" stroke-linejoin="round"/>

</svg>
<div class="abs" style="left:0;top:-140px;width:1919px;height:1079px">
<!-- ===== BROWSER ===== -->
<div class="abs" style="left:4px;top:144px;width:300px;height:25px;background:#f3f3f3;border:1px solid #cacaca"></div>
<div class="t" style="left:29px;top:151px;font-size:11px;color:#555">BROWSER</div>
<div class="row" style="left:40px;top:174px;width:144px"></div>
<div class="row" style="left:58px;top:198px;width:157px"></div>
<div class="row" style="left:58px;top:222px;width:142px"></div>
<div class="row" style="left:58px;top:246px;width:115px"></div>
<div class="row" style="left:76px;top:270px;width:79px"></div>
<div class="row" style="left:76px;top:294px;width:79px"></div>
<div class="row" style="left:76px;top:318px;width:79px"></div>
<div class="row" style="left:76px;top:342px;width:75px"></div>
<div class="row" style="left:76px;top:366px;width:83px"></div>
<div class="row" style="left:76px;top:390px;width:83px"></div>
<div class="row" style="left:76px;top:414px;width:83px"></div>
<div class="row" style="left:58px;top:438px;width:103px"></div>
<div class="row" style="left:76px;top:462px;width:111px"></div>
<div class="row" style="left:58px;top:486px;width:107px"></div>
<div class="row" style="left:58px;top:510px;width:131px"></div>
<div class="abs" style="left:65px;top:176px;width:94px;height:16px;background:#9b9b9b"></div>
<div class="abs" style="left:101px;top:462.500px;width:86px;height:19px;background:#0696d7"></div>
<div class="bt" style="left:98px;top:179px;font-weight:700;color:#fff">3D Druck</div>
<div class="bt" style="left:91px;top:203px">Dokumenteinstellungen</div>
<div class="bt" style="left:91px;top:227px">Benannte Ansichten</div>
<div class="bt" style="left:116px;top:251px">Ursprung</div>
<div class="bt" style="left:134px;top:275px">O</div>
<div class="bt" style="left:134px;top:299px">X</div>
<div class="bt" style="left:134px;top:323px">Y</div>
<div class="bt" style="left:134px;top:347px">Z</div>
<div class="bt" style="left:134px;top:371px">XY</div>
<div class="bt" style="left:134px;top:395px">XZ</div>
<div class="bt" style="left:134px;top:419px">YZ</div>
<div class="bt" style="left:116px;top:443px">Körper</div>
<div class="bt" style="left:134px;top:467px;font-weight:700;color:#fff">Körper2</div>
<div class="bt" style="left:116px;top:491px">Skizzen</div>
<div class="bt" style="left:116px;top:515px">Konstruktion</div>
<svg width="320" height="400" viewBox="0 140 320 400" style="left:0;top:140px">
<defs>
<linearGradient id="tri" x1="0" y1="0" x2="1" y2="1"><stop offset=".4" stop-color="#d8d8d8"/><stop offset="1" stop-color="#555"/></linearGradient>
<g id="eye"><path d="M-8 0C-5-5.500 5-5.500 8 0C5 5.500-5 5.500-8 0Z"/><circle r="3.100" fill="#f3f3f3"/><circle r="1.700"/></g>
<g id="fold"><path d="M0 1.500h6.300l1.200 1.700H16v10.300H0z"/><path d="M0 .2h6v.8H0z"/></g>
<g id="texp"><path d="M11.200 0V11.200H0Z" fill="url(#tri)" stroke="#333" stroke-width="1" stroke-linejoin="round"/></g>
<g id="tcol"><path d="M0 0L8.500 6.500L0 13Z" fill="#f6f6f6" stroke="#333" stroke-width="1.300" stroke-linejoin="round"/></g>
<g id="axi"><rect x="2.500" y=".5" width="12" height="12" fill="#f8f8f8" stroke="#555" stroke-width="1"/><path d="M0 15L9.500 5.500" stroke="#e8945a" stroke-width="1.400"/></g>
<g id="pla"><path d="M3.500 3.500V.5h11.500v11.500h-3" fill="none" stroke="#555" stroke-width="1"/><rect x="0" y="3.500" width="11.500" height="11.500" fill="#e8975e"/><rect x="4" y="3.700" width="7.300" height="7.300" fill="#e0a680" opacity=".75"/></g>
</defs>
<!-- header icons -->
<path d="M14 153l-5 3.500 5 3.500zM19.500 153l-5 3.500 5 3.500z" fill="#333"/>
<circle cx="287.300" cy="156.500" r="4.700" fill="#111"/><path d="M284.500 156.500h5.600" stroke="#fff" stroke-width="1.300"/>
<!-- row 1 -->
<use href="#texp" x="20.500" y="178.500"/>
<use href="#eye" x="51" y="184" fill="#8a8a8a"/>
<path d="M68.500 180.500l3-3h12.500v11.500l-3 3h-12.500z" fill="#e6e9ee" stroke="#333" stroke-width="1" stroke-linejoin="round"/><path d="M81 180.500l3-3v11.500l-3 3z" fill="#c4c8cf"/><path d="M68.500 180.500h12.500v11.500h-12.500z" fill="#f2f4f7" stroke="#333" stroke-width=".7"/>
<circle cx="169.300" cy="184.300" r="6" fill="#f6f6f6" stroke="#222" stroke-width="1.100"/><circle cx="169.300" cy="184.300" r="2.300" fill="#222"/>
<!-- row 2 -->
<use href="#tcol" x="40.500" y="201.500"/>
<g transform="translate(68.500,208)" fill="#7e7e7e"><circle r="5.600"/><g id="teeth"><rect x="-1.700" y="-7.700" width="3.400" height="15.400" rx=".6"/><rect x="-1.700" y="-7.700" width="3.400" height="15.400" rx=".6" transform="rotate(45)"/><rect x="-1.700" y="-7.700" width="3.400" height="15.400" rx=".6" transform="rotate(90)"/><rect x="-1.700" y="-7.700" width="3.400" height="15.400" rx=".6" transform="rotate(135)"/></g><circle r="2.500" fill="#f3f3f3"/></g>
<!-- row 3 -->
<use href="#tcol" x="40.500" y="225.500"/>
<use href="#fold" x="61" y="225" fill="#8c8c8c"/>
<!-- row 4 Ursprung -->
<use href="#texp" x="39" y="250.500"/>
<g transform="translate(69,256)" fill="none" stroke="#8a8a8a" stroke-width="1"><path d="M-7.500 0C-5-5 5-5 7.500 0C5 5-5 5-7.500 0Z"/><circle r="2.600"/><path d="M-5 -4.500L5.500 5" stroke-width="1.100"/></g>
<use href="#fold" x="86" y="249" fill="#8c8c8c"/>
<!-- origin children -->
<use href="#eye" x="87" y="280" fill="#dcdcdc"/><use href="#eye" x="87" y="304" fill="#dcdcdc"/><use href="#eye" x="87" y="328" fill="#dcdcdc"/><use href="#eye" x="87" y="352" fill="#dcdcdc"/><use href="#eye" x="87" y="376" fill="#dcdcdc"/><use href="#eye" x="87" y="400" fill="#dcdcdc"/><use href="#eye" x="87" y="424" fill="#dcdcdc"/>
<g transform="translate(111.500,279.500)"><path d="M0-7.500V7.500M-7.500 0H7.500" stroke="#e8945a" stroke-width="1.100"/><path d="M0-4.300L4.300 0L0 4.300L-4.300 0Z" fill="#e8945a"/><rect x="-1.400" y="-1.400" width="2.800" height="2.800" fill="#fff"/></g>
<use href="#axi" x="104.500" y="296"/><use href="#axi" x="104.500" y="320"/><use href="#axi" x="104.500" y="344"/>
<use href="#pla" x="104" y="368"/><use href="#pla" x="104" y="392"/><use href="#pla" x="104" y="416"/>
<!-- Körper -->
<use href="#texp" x="39" y="442.500"/>
<use href="#eye" x="69" y="448" fill="#8a8a8a"/>
<use href="#fold" x="86" y="441" fill="#8c8c8c"/>
<path d="M83 454.500H159" stroke="#5f79ad" stroke-width="2.400" stroke-dasharray="2.600 2.200" transform="skewX(-30)" style="transform-origin:83px 454.500px"/>
<!-- Körper2 -->
<use href="#eye" x="87" y="472" fill="#8a8a8a"/>
<g transform="translate(105,464.500)"><defs><linearGradient id="cyl" x1="0" y1="0" x2="1" y2="0"><stop offset="0" stop-color="#fff"/><stop offset=".45" stop-color="#f4f5f7"/><stop offset="1" stop-color="#a9aeb8"/></linearGradient></defs><rect x=".3" y=".3" width="14.200" height="14.400" rx="3.600" fill="url(#cyl)" stroke="#333" stroke-width="1"/><path d="M1.200 3.600c2 1.700 10.400 1.700 12.400 0" stroke="#c9ccd2" stroke-width=".8" fill="none"/><path d="M1 3.200C1.500 1.300 13.300 1.300 13.800 3.200C13 4.800 1.800 4.800 1 3.200Z" fill="#fdfdfd"/></g>
<!-- Skizzen / Konstruktion -->
<use href="#tcol" x="40.500" y="489.500"/><use href="#eye" x="69" y="496" fill="#8a8a8a"/><use href="#fold" x="86" y="489" fill="#8c8c8c"/>
<use href="#tcol" x="40.500" y="513.500"/><use href="#eye" x="69" y="520" fill="#8a8a8a"/><use href="#fold" x="86" y="513" fill="#8c8c8c"/>
</svg>
<!-- ===== tooltip ===== -->
<div class="abs" style="left:983px;top:395px;width:386px;height:17px;background:#f1f1f1;border-bottom:1px solid #9a9a9a"></div>
<div class="t" style="left:986px;top:398px;font-size:12px;color:#111;letter-spacing:-.165px">Typ, Richtung bzw. Stärke angeben oder STRG-Taste gedrückt halten, um</div>
<!-- ===== value input ===== -->
<div class="abs" style="left:717px;top:431px;width:108px;height:22px;background:#f1f1f1"></div>
<div class="abs" style="left:731px;top:432.500px;width:70px;height:19px;background:#fff;border:1px solid #b9b9b9"></div>
<div class="t" style="left:731px;top:436px;width:70px;text-align:center;font-size:12px;color:#222">3</div>
<svg width="110" height="24" viewBox="717 431 110 24" style="left:717px;top:431px">
<g fill="#d2d2d2"><circle cx="722" cy="435" r=".8"/><circle cx="725" cy="435" r=".8"/><circle cx="722" cy="438" r=".8"/><circle cx="725" cy="438" r=".8"/><circle cx="722" cy="441" r=".8"/><circle cx="725" cy="441" r=".8"/><circle cx="722" cy="444" r=".8"/><circle cx="725" cy="444" r=".8"/><circle cx="722" cy="447" r=".8"/><circle cx="725" cy="447" r=".8"/><circle cx="722" cy="450" r=".8"/><circle cx="725" cy="450" r=".8"/></g>
<path d="M728.500 432v20" stroke="#d0d0d0" stroke-width="1"/>
<g fill="#7a7a7a"><circle cx="813.500" cy="436.500" r="1.300"/><circle cx="813.500" cy="441.800" r="1.300"/><circle cx="813.500" cy="447" r="1.300"/></g>
</svg>
<!-- ===== ViewCube ===== -->
<svg width="119" height="115" viewBox="1800 150 119 115" style="left:1800px;top:150px">
<defs><filter id="bl" x="-50%" y="-50%" width="200%" height="200%"><feGaussianBlur stdDeviation="4"/></filter></defs>
<path d="M1830 228L1860 250L1899 224L1868 208Z" fill="#000" opacity=".14" filter="url(#bl)"/>
<path d="M1855.900 167.900L1891.600 184.100L1856.200 202.700L1821.300 183Z" fill="#ededed" fill-opacity=".72" stroke="#444" stroke-opacity=".6" stroke-width=".6" stroke-linejoin="round"/>
<path d="M1821.300 183L1856.200 202.700L1856.500 243.700L1825 222.400Z" fill="#e6e6e6" fill-opacity=".72" stroke="#444" stroke-opacity=".6" stroke-width=".6" stroke-linejoin="round"/>
<path d="M1856.200 202.700L1891.600 184.100L1887.600 221.400L1856.500 243.700Z" fill="#e2e2e2" fill-opacity=".72" stroke="#444" stroke-opacity=".6" stroke-width=".6" stroke-linejoin="round"/>
<g font-family="Liberation Sans,Arial,sans-serif" fill="#6f747d" stroke="#6f747d" stroke-width=".2" text-anchor="middle">
<text transform="matrix(.7 .4 -.8 .35 1856.500 185.300)" y="3.400" font-size="9.600">OBEN</text>
<text transform="matrix(.74 .48 .06 1 1839.800 214.500)" y="3.300" font-size="9.600">VORNE</text>
<text transform="matrix(.74 -.46 -.08 1 1873.800 212.500)" y="3.300" font-size="9.600">RECHTS</text>
</g>
<path d="M1825 222.400L1820.200 176.600" stroke="#4646f0" stroke-width="1.900"/>
<path d="M1825 222.400L1862.900 249.600" stroke="#f08a8a" stroke-width="1.900"/>
<text x="1814.800" y="174.200" font-family="Liberation Sans,Arial,sans-serif" font-size="14.500" fill="#7272f8" stroke="#7272f8" stroke-width=".35">Z</text>
<text x="1863.300" y="259" font-family="Liberation Sans,Arial,sans-serif" font-size="14" fill="#f58888" stroke="#f58888" stroke-width=".35">X</text>
</svg>
<!-- ===== SCHALE dialog ===== -->
<div class="abs" style="left:1666px;top:264px;width:250px;height:213px;background:#f3f3f3;border:1px solid #c8c8c8"></div>
<div class="abs" style="left:1667px;top:288px;width:248px;height:1px;background:#cfcfcf"></div>
<div class="abs" style="left:1667px;top:440px;width:248px;height:1px;background:#cfcfcf"></div>
<div class="t" style="left:1691px;top:271px;font-size:11px;color:#555">SCHALE</div>
<div class="t" style="left:1679px;top:299px;font-size:11px;color:#222">Flächen/Körper</div>
<div class="t" style="left:1679px;top:329px;font-size:11px;color:#222">Tangentenkette</div>
<div class="t" style="left:1679px;top:359px;font-size:11px;color:#222">Wandungstyp</div>
<div class="t" style="left:1679px;top:389px;font-size:11px;color:#222">Innere Dicke</div>
<div class="t" style="left:1679px;top:419px;font-size:11px;color:#222">Richtung</div>
<div class="abs" style="left:1768px;top:290px;width:87px;height:28px;background:#0696d7;border-radius:1px"></div>
<div class="t" style="left:1790.500px;top:299px;font-size:11px;font-weight:400;color:#fff;letter-spacing:-.15px;-webkit-text-stroke:.35px #fff">1 ausgewi...</div>
<div class="abs" style="left:1768.400px;top:350.300px;width:23.200px;height:27.300px;background:#0696d7;border-radius:1.500px"></div>
<div class="abs" style="left:1769px;top:381.300px;width:114px;height:25.500px;background:#fff;border:1px solid #c6c6c6"></div>
<div class="t" style="left:1772.500px;top:389px;font-size:11px;color:#222">3 mm</div>
<div class="abs" style="left:1768.500px;top:410.800px;width:115px;height:26.600px;background:#fff;border:1.500px solid #d8d8d8;border-radius:3px"></div>
<div class="t" style="left:1792px;top:419px;font-size:11px;color:#222">Innen</div>
<div class="abs" style="left:1766px;top:449.500px;width:60px;height:19px;background:#e2e2e2;border:1px solid #adadad"></div>
<div class="abs" style="left:1836px;top:449.500px;width:68px;height:19px;background:#e2e2e2;border:1px solid #adadad"></div>
<div class="t" style="left:1766px;top:453px;width:60px;text-align:center;font-size:12px;color:#444">OK</div>
<div class="t" style="left:1836px;top:453px;width:68px;text-align:center;font-size:12px;color:#444;letter-spacing:-.1px">Abbrechen</div>
<svg width="260" height="220" viewBox="1660 260 260 220" style="left:1660px;top:260px">
<circle cx="1682.400" cy="276.300" r="4.700" fill="#111"/><path d="M1679.600 276.300h5.600" stroke="#fff" stroke-width="1.300"/>
<path d="M1901 273.500l5 3.500-5 3.500zM1906.300 273.500l5 3.500-5 3.500z" fill="#111"/>
<path d="M1776.500 296v12.500l2.900-2.600 2 4.600 2-.9-2-4.500h4z" fill="#e8e8e8" stroke="#3a3a3a" stroke-width="1" stroke-linejoin="round"/>
<path d="M1867 300.800l6.400 6.400M1873.400 300.800l-6.400 6.400" stroke="#666" stroke-width="1.100"/>
<rect x="1773.500" y="327.200" width="13.200" height="13" rx="3" fill="#dadada" stroke="#333" stroke-width="1.200"/>
<path d="M1776 333.500l3 3.500 5.500-8" stroke="#111" stroke-width="1.500" fill="none"/>
<!-- wall type icons -->
<path d="M1772.300 361.300l4-4.900h11.400v10.200l-4.600 4.800h-10.800z" fill="#62aee6" stroke="#dfeefa" stroke-width="1" stroke-linejoin="round"/><path d="M1772.300 361.300l4-4.900v10.200l-4 4.800z" fill="#4f97d4"/><path d="M1776.300 366.600h11.400l-4.600 4.800h-10.800z" fill="#8fcafb"/>
<path d="M1801.500 361c0-3 2-4.500 5-4.500h10v10c0 3-2 5-5 5h-10z" fill="#cfd3d8" stroke="#555" stroke-width="1"/><path d="M1803.500 362.500c0-2 1.500-3.500 3.500-3.500h7.500v7.500c0 2-1.500 3.500-3.500 3.500h-7.500z" fill="#4a8fcb"/><path d="M1809 359v5.500h5.500M1809 364.500l-5 5" stroke="#2d6aa3" stroke-width=".8" fill="none"/>
<!-- direction icon -->
<path d="M1777.200 416.300l9.600 4v6.600l-8.300-2.700z" fill="#f2ad80" stroke="#e39a6a" stroke-width=".5"/><path d="M1772.800 430l8.800-8.400" stroke="#444" stroke-width="1.100"/><path d="M1772 430.800l.8-3.800 3 3z" fill="#444"/>
<path d="M1872 422.500h6l-3 4z" fill="#222"/>
<circle cx="1681" cy="458.800" r="6" fill="#111"/><path d="M1681 457.600v4.200" stroke="#fff" stroke-width="1.900"/><circle cx="1681" cy="455.300" r="1.100" fill="#fff"/>
</svg>
<!-- ===== nav bar ===== -->
<div class="abs" style="left:842px;top:952px;width:237px;height:23px;background:#f3f3f3"></div>
<svg width="240" height="26" viewBox="842 951 240 26" style="left:842px;top:951px">
<g fill="#333"><path d="M866 961.500h5.600l-2.800 3.800zM976.800 961.500h5.600l-2.800 3.800zM1007.300 961.500h5.600l-2.800 3.800zM1038.300 961.500h5.600l-2.800 3.800zM1069 961.500h5.600l-2.800 3.800z"/></g>
<!-- orbit -->
<g stroke="#333" fill="none" stroke-width="1.200"><path d="M851 968.200c-3.500-.5-5.500-1.700-5.500-3.200c0-2 3.600-3.300 8-3.300s7.500 1.300 7.500 3.100c0 1.600-2.500 2.800-6 3.200"/><path d="M852.700 971.500v-13M854.500 971.500v-13" stroke-width=".9"/><path d="M850.700 960.200l2.900-4 2.900 4z" fill="#fafafa" stroke-width=".9"/><path d="M851.300 966.200l-3.800 2 3.300 2.600z" fill="#333" stroke="none"/></g>
<!-- look at -->
<g><rect x="878.800" y="961.500" width="14.700" height="9.700" fill="#eee" stroke="#333" stroke-width="1.200"/><rect x="881.800" y="964.500" width="8.700" height="3.700" fill="#b9bcc4" stroke="#333" stroke-width=".9"/><path d="M880.500 961l2.700-3.800 2 1.700 2.500-2.200 1.700 1.700 2.800-1.200v3.800" fill="none" stroke="#333" stroke-width="1" stroke-linejoin="round"/></g>
<!-- pan -->
<path d="M908.300 966.200l-2.600-3.300c-.9-1.200.7-2.400 1.600-1.300l1.900 2.200v-5.200c0-1.400 1.900-1.400 1.900 0v-1.500c0-1.400 1.900-1.400 1.900 0v1c0-1.400 1.900-1.400 1.900 0v1.700c0-1.300 1.800-1.300 1.800 0v6.200c0 3.600-1.800 5.600-4.600 5.600-2 0-3.300-.9-4.300-2.500z" fill="#fafafa" stroke="#333" stroke-width="1" stroke-linejoin="round"/>
<path d="M911.100 958.500v4.500M913 957.500v5.500M914.900 958.700v4.300" stroke="#333" stroke-width=".8" fill="none"/>
<!-- zoom -->
<g><circle cx="936" cy="962.500" r="4.600" fill="#dfe8f2" stroke="#333" stroke-width="1.300"/><path d="M939.500 966l3.800 4.300" stroke="#333" stroke-width="2.300"/><path d="M941.300 958.200h4.600M943.600 955.900v4.600M941.300 962.300h4.600" stroke="#333" stroke-width="1"/></g>
<!-- zoom window -->
<g><rect x="956.500" y="956.500" width="14.500" height="14" fill="none" stroke="#444" stroke-width=".9" stroke-dasharray="2 1.400"/><circle cx="963" cy="962.500" r="5.500" fill="#e6edf5" stroke="#333" stroke-width="1.300"/><path d="M967 966.800l4 4.400" stroke="#333" stroke-width="2.400"/></g>
<!-- display -->
<g><rect x="989.500" y="957" width="15" height="11.300" rx="1" fill="#eef1f5" stroke="#333" stroke-width="1.200"/><rect x="992" y="959.300" width="10" height="6.600" fill="#8fb0e0" stroke="#3a5a94" stroke-width=".7"/><path d="M993.500 971.300h7.200l-1.200-2.800h-4.800z" fill="#e8e8e8" stroke="#333" stroke-width=".9" stroke-linejoin="round"/></g>
<!-- grid -->
<g><rect x="1020.500" y="957" width="15" height="15" fill="#e6e8ec"/><path d="M1020.500 965.500h15v6.500h-15z" fill="#a9acb5"/><path d="M1022.640 957v15M1024.780 957v15M1026.920 957v15M1029.060 957v15M1031.200 957v15M1033.340 957v15M1020.500 959.140h15M1020.500 961.280h15M1020.500 963.420h15M1020.500 965.560h15M1020.500 967.700h15M1020.500 969.840h15" stroke="#4a4a4a" stroke-width=".5" fill="none"/><rect x="1020.500" y="957" width="15" height="15" fill="none" stroke="#333" stroke-width="1"/></g>
<!-- viewports -->
<g fill="#9db9e6" stroke="#2c4c8c" stroke-width="1.100"><rect x="1051.200" y="957.500" width="6.400" height="5.600" rx=".8"/><rect x="1059.200" y="957.500" width="6.400" height="5.600" rx=".8"/><rect x="1051.200" y="964.900" width="6.400" height="5.600" rx=".8"/><rect x="1059.200" y="964.900" width="6.400" height="5.600" rx=".8"/></g>
</svg>
<!-- ===== comments ===== -->
<div class="abs" style="left:4px;top:952.500px;width:300px;height:25px;background:#f3f3f3;border:1px solid #cacaca"></div>
<div class="t" style="left:29px;top:960px;font-size:11px;color:#555">KOMMENTARE</div>
<svg width="12" height="12" viewBox="-6 -6 12 12" style="left:281.300px;top:959.300px"><circle r="4.700" fill="#111"/><path d="M-2.800 0h5.600M0-2.800v5.600" stroke="#fff" stroke-width="1.300"/></svg>
<!-- ===== Fläche ===== -->
<div class="t" style="left:1841.500px;top:960.500px;font-size:11px;font-weight:700;color:#333;will-change:transform;text-shadow:0 0 2px #fff,0 0 2px #fff;letter-spacing:-.05px">Fläche</div>
<svg width="18" height="18" viewBox="-9 -9 18 18" style="left:1890.600px;top:956px"><path d="M-7.500 0a7.500 7.500 0 0 1 15 0v6a1.500 1.500 0 0 1-1.500 1.500h-6a7.500 7.500 0 0 1-7.500-7.500z" fill="#0a0a0a"/><path d="M-5 1l8.500-4.500M-5 3l9.500-5M-2.500 3.500l7-3.700M2 -3.500l2.500 5M-1 -1.900l2.500 4.500" stroke="#e8e8e8" stroke-width=".8"/></svg>

</div>

</div>
<!-- ===== TIMELINE ===== -->
<div id="timeline" class="abs">
<div class="abs" style="left:0;top:-983px;width:1919px;height:1079px">
<svg width="1919" height="50" viewBox="0 983 1919 50" style="left:0;top:983px">
<g fill="#555">
<rect x="10.800" y="1001" width="1.600" height="12"/><path d="M22 1001v12l-9.300-6z"/>
<path d="M45 1001.300v11.400l-9.700-5.700z"/><rect x="46.300" y="1004.500" width="1.500" height="5"/>
<path d="M61 999.200v15l12-7.500z"/>
<rect x="85" y="1004.500" width="1.500" height="5"/><path d="M87.800 1001.300v11.400l9.700-5.700z"/>
<path d="M111 1001v12l9.300-6z"/><rect x="120.500" y="1001" width="1.600" height="12"/>
</g>
<!-- track -->
<path d="M155 1017v6H274v-6M178 1017v6M202 1017v6M226 1017v6M250 1017v6" stroke="#c9c9c9" stroke-width="1.800" fill="none"/>
<!-- sphere -->
<circle cx="153.800" cy="1005.800" r="8" fill="#8ecbf7"/><path d="M145.900 1007a8 8 0 0 0 15.800 0c-4 2-11.800 2-15.800 0z" fill="#6db4ea"/>
<!-- remove -->
<path d="M171.500 1000l3.600 3.600M175.100 1000l-3.600 3.600" stroke="#e02020" stroke-width="1.500"/>
<path d="M176.500 1006l2-2h7v6.500l-2 2h-7z" fill="#cfe6f8" stroke="#666" stroke-width=".8" stroke-linejoin="round"/><path d="M176.500 1006h7v6.500h-7z" fill="#9ccbed" stroke="#666" stroke-width=".6"/>
<!-- sketch -->
<g id="tsk"><rect x="195" y="999" width="12.500" height="12.500" fill="#f6f6f6" stroke="#b5b5b5" stroke-width=".9"/><path d="M199.500 1002h4M198 1003.500v4" fill="none" stroke="#888" stroke-width=".7"/><path d="M204.500 1002.500c-.5 3.500-2.500 5.500-6 6" stroke="#777" stroke-width=".7" fill="none"/><g fill="#3c9bf0"><rect x="194.200" y="998.200" width="1.600" height="1.600"/><rect x="206.700" y="998.200" width="1.600" height="1.600"/><rect x="194.200" y="1010.700" width="1.600" height="1.600"/><rect x="197.200" y="1001.200" width="1.600" height="1.600"/><rect x="203.700" y="1001.200" width="1.600" height="1.600"/><rect x="197.200" y="1007.700" width="1.600" height="1.600"/></g><path d="M203.500 1011l4.300-4.300 1.900 1.900-4.300 4.300-2.400.5z" fill="#f2b33d"/><path d="M207.800 1006.700l1-1 1.900 1.900-1 1z" fill="#e8343a"/><path d="M203.500 1011l-.5 2.400 2.400-.5z" fill="#555"/></g>
<use href="#tsk" x="48"/>
<!-- construct plane -->
<path d="M218.800 1004l4-4.500h3v10.500l-4 4.300h-3z" fill="#dedede" stroke="#777" stroke-width=".8" stroke-linejoin="round"/>
<path d="M223.300 1003.500l4.200-4.500v11l-4.200 4.500z" fill="#56c27a"/>
<path d="M229.500 1004l4.200-4.500v10.500l-4.200 4.500z" fill="#e59864"/>
<!-- loft -->
<path d="M265.500 998.500h16v9.500l-4 4.500h-8l-4-4.500z" fill="#3f8fd6"/>
<path d="M267 998.500h13l-2.500 7h-8z" fill="#8ecbf7"/>
<circle cx="273.800" cy="1009.300" r="4.300" fill="#f6f6f6" stroke="#bbb" stroke-width=".7"/>
<!-- marker -->
<path d="M280 992h12.100v3.100l-5.100 5.400v23.300h-2v-23.300l-5-5.400z" fill="#555"/>
<!-- gear -->
<g transform="translate(1899,1006.700)" fill="#7a7a7a"><circle r="5.800"/><rect x="-1.800" y="-8" width="3.600" height="16" rx=".7"/><rect x="-1.800" y="-8" width="3.600" height="16" rx=".7" transform="rotate(45)"/><rect x="-1.800" y="-8" width="3.600" height="16" rx=".7" transform="rotate(90)"/><rect x="-1.800" y="-8" width="3.600" height="16" rx=".7" transform="rotate(135)"/><circle r="2.600" fill="#f2f2f2"/></g>
</svg>
</div>

</div>
<!-- ===== TASKBAR ===== -->
<div id="taskbar" class="abs">
<div class="abs" style="left:0;top:-1033px;width:1919px;height:1079px;will-change:transform">
<div class="t" style="left:50.500px;top:1043px;font-size:11.500px;color:#1a1a1a;letter-spacing:-.3px">10°C</div>
<div class="t" style="left:50.500px;top:1058.300px;font-size:11.700px;color:#4a4a4a;letter-spacing:-.05px">Leichter Regen</div>
<div class="abs" style="left:719.500px;top:1040.500px;width:219px;height:31px;border-radius:16px;background:#fafafa;border:1px solid #dedede;box-shadow:0 1px 1px rgba(0,0,0,.06)"></div>
<div class="t" style="left:756.300px;top:1049.500px;font-size:13px;color:#555;letter-spacing:-.05px">Suche</div>
<div class="abs" style="left:1208px;top:1037px;width:38px;height:38px;border-radius:5px;background:#f9f9f9;border:1px solid #e6e6e6"></div>
<div class="t" style="left:1841px;top:1043px;width:60px;text-align:right;font-size:11.500px;color:#1a1a1a;letter-spacing:-.1px">20:19</div>
<div class="t" style="left:1831px;top:1058.200px;width:70px;text-align:right;font-size:11.700px;color:#1a1a1a;letter-spacing:-.05px">02.11.2025</div>
<svg width="1919" height="46" viewBox="0 1033 1919 46" style="left:0;top:1033px">
<defs>
<linearGradient id="wl" x1="0" y1="0" x2="1" y2="1"><stop offset="0" stop-color="#55cdfa"/><stop offset="1" stop-color="#0667cf"/></linearGradient>
<linearGradient id="cl" x1="0" y1="0" x2="0" y2="1"><stop offset="0" stop-color="#9db9ee"/><stop offset="1" stop-color="#e4ecfb"/></linearGradient>
<linearGradient id="fo" x1="0" y1="0" x2="0" y2="1"><stop offset="0" stop-color="#ffd75e"/><stop offset="1" stop-color="#f3b62a"/></linearGradient>
<linearGradient id="tv" x1="0" y1="0" x2="1" y2="1"><stop offset="0" stop-color="#fff"/><stop offset="1" stop-color="#a8a8a8"/></linearGradient>
</defs>
<!-- weather -->
<path d="M24.700 1060.300a4.800 4.800 0 0 1-.6-9.500a6.900 6.900 0 0 1 12.600-1.600a5.300 5.300 0 0 1 .8 10.700z" fill="url(#cl)" stroke="#9db9ee" stroke-width=".6"/>
<path d="M33.300 1056.800c2.500 2.300 5.700 3.400 5.700 6.600a3.300 3.300 0 0 1-6.600 0c0-2 .6-4.100.9-6.600z" fill="#1468f0"/>
<!-- windows -->
<path d="M683 1045h11v11h-11zM695.300 1045h11v11h-11zM683 1057.300h11v11h-11zM695.300 1057.300h11v11h-11z" fill="url(#wl)"/>
<!-- search icon -->
<circle cx="737" cy="1055.300" r="5.400" fill="none" stroke="#222" stroke-width="1.600"/><path d="M740.900 1059.400l4.200 4" stroke="#222" stroke-width="1.900" stroke-linecap="round"/>
<!-- task view -->
<rect x="950.800" y="1051" width="18" height="15.800" rx="1" fill="#2a2a2a"/>
<rect x="957" y="1045" width="17.800" height="15.800" rx="1" fill="url(#tv)" fill-opacity=".85"/>
<!-- opera gx -->
<circle cx="1007" cy="1056" r="11.600" fill="none" stroke="#f0355b" stroke-width="1.400"/><ellipse cx="1008.500" cy="1056" rx="7.300" ry="10.600" fill="none" stroke="#f0355b" stroke-width="1.300"/><path d="M1011 1047.500c3 4 3 13 0 17" stroke="#f0355b" stroke-width="1" fill="none"/>
<!-- explorer -->
<path d="M1039 1047a1.500 1.500 0 0 1 1.500-1.500h6l2 2.500H1063v4h-24z" fill="#e3a211"/>
<rect x="1039" y="1048.500" width="24.200" height="17.800" rx="1.200" fill="url(#fo)"/>
<path d="M1043.200 1066.300v-4a2.300 2.300 0 0 1 2.300-2.300h11a2.300 2.300 0 0 1 2.300 2.300v4z" fill="#1b82d6"/><rect x="1046" y="1062.700" width="10" height="1.400" rx=".7" fill="#1565b0"/>
<!-- discord -->
<circle cx="1094.800" cy="1056" r="12.100" fill="#5865f2"/>
<path d="M1089.200 1051.300c1.700-.8 3-1.100 3.700-1.100l.4.800c1-.1 2-.1 3 0l.4-.8c.8 0 2 .3 3.700 1.100c1.700 2.600 2.600 5.500 2.300 8.900c-1.500 1.100-2.900 1.700-4.300 2l-.9-1.500c.6-.2 1-.5 1.500-.8l-.3-.3c-2.700 1.300-5.500 1.300-7.800 0l-.3.300c.5.300.9.600 1.500.8l-.9 1.500c-1.400-.3-2.800-.9-4.300-2c-.3-3.400.6-6.300 2.300-8.900z" fill="#fff"/><ellipse cx="1092.200" cy="1056.800" rx="1.500" ry="1.700" fill="#5865f2"/><ellipse cx="1097.400" cy="1056.800" rx="1.500" ry="1.700" fill="#5865f2"/>
<!-- spotify -->
<circle cx="1139" cy="1056" r="11.400" fill="#1ed760"/>
<g fill="none" stroke="#111" stroke-linecap="round"><path d="M1132.300 1052.300c4.500-1.400 9.500-1 13.600 1.200" stroke-width="2.100"/><path d="M1133 1056.200c4-1.100 8-.7 11.500 1.200" stroke-width="1.700"/><path d="M1133.800 1059.800c3.200-.8 6.300-.5 9 1" stroke-width="1.400"/></g>
<!-- minecraft -->
<rect x="1171" y="1044.200" width="24" height="23.500" fill="#4c9c2e"/>
<path d="M1175.500 1049h5v5h-5zM1185.500 1049h5v5h-5zM1180.500 1054h5v2.500h2.500v7.500h-2.500v-2.500h-5v2.500h-2.500v-7.500h2.500z" fill="#0c0c0c"/>
<!-- fusion -->
<path d="M1216 1048l2-2v17l-2 1z" fill="#ffa24a"/>
<path d="M1237 1047.500l1.200 1v16.500a2 2 0 0 1-2 2.500h-15.500l-1.500-1.500z" fill="#8c3a12"/>
<path d="M1218 1046a2 2 0 0 1 2-2h15a2 2 0 0 1 2 2v15h-19z" fill="#ff6b00"/>
<path d="M1218 1060.500h19v4.500a2 2 0 0 1-2 2h-15a2 2 0 0 1-2-2z" fill="#8c3a12"/>
<path d="M1224.300 1047h7.200v2.200h-4.700v2.800h4v2.200h-4v4.300h-2.500z" fill="#fff"/>
<text x="1227.600" y="1065.800" font-size="4.600" font-weight="700" fill="#f6d7bd" text-anchor="middle" font-family="Liberation Sans,Arial,sans-serif">FUS</text>
<rect x="1218.800" y="1072.300" width="16.300" height="2.600" rx="1.300" fill="#0a78d4"/>
<g fill="#8a8a8a"><rect x="1004" y="1072" width="6" height="2.600" rx="1.300"/><rect x="1048" y="1072" width="6" height="2.600" rx="1.300"/><rect x="1092" y="1072" width="6" height="2.600" rx="1.300"/><rect x="1136" y="1072" width="6" height="2.600" rx="1.300"/></g>
<!-- tray -->
<path d="M1734 1058.600l5.200-5 5.200 5" stroke="#222" stroke-width="1.500" fill="none"/>
<g stroke="#1a1a1a" stroke-width="1.200" fill="none"><rect x="1763.600" y="1048.800" width="11.400" height="9.400" rx="1"/><path d="M1766.500 1062.400h6M1769.500 1058.200v4.200M1777.500 1054.500v9"/><rect x="1775.700" y="1048.500" width="3.600" height="5.800" rx="1" fill="#eee"/></g>
<g stroke="#1a1a1a" stroke-width="1.200" fill="none" stroke-linejoin="round"><path d="M1787.500 1053.800h2.500l3.500-3.300v10.500l-3.500-3.300h-2.500z"/><path d="M1795.700 1053.200c1 1.600 1 3.600 0 5.200M1797.900 1051.400c2 2.700 2 6.200 0 8.800"/><path d="M1800.200 1049.600c3 3.800 3 8.600 0 12.400" stroke="#bbb" stroke-width=".9"/></g>
<g><rect x="1811.800" y="1051.600" width="13.200" height="8.800" rx="1.800" fill="none" stroke="#1a1a1a" stroke-width="1.200"/><path d="M1825.600 1054.300c1 .2 1.500.8 1.500 1.700s-.5 1.500-1.500 1.700z" fill="#1a1a1a"/><rect x="1813.700" y="1053.400" width="9.400" height="5.200" rx=".7" fill="#1a1a1a"/><path d="M1814.800 1048.700l-3.300 5.500h2.400l-1.200 4 4-5.300h-2.500l1.600-4.200z" fill="#1a1a1a" stroke="#eee" stroke-width=".7"/></g>
</svg>
</div>

</div>
</body>
</html>
